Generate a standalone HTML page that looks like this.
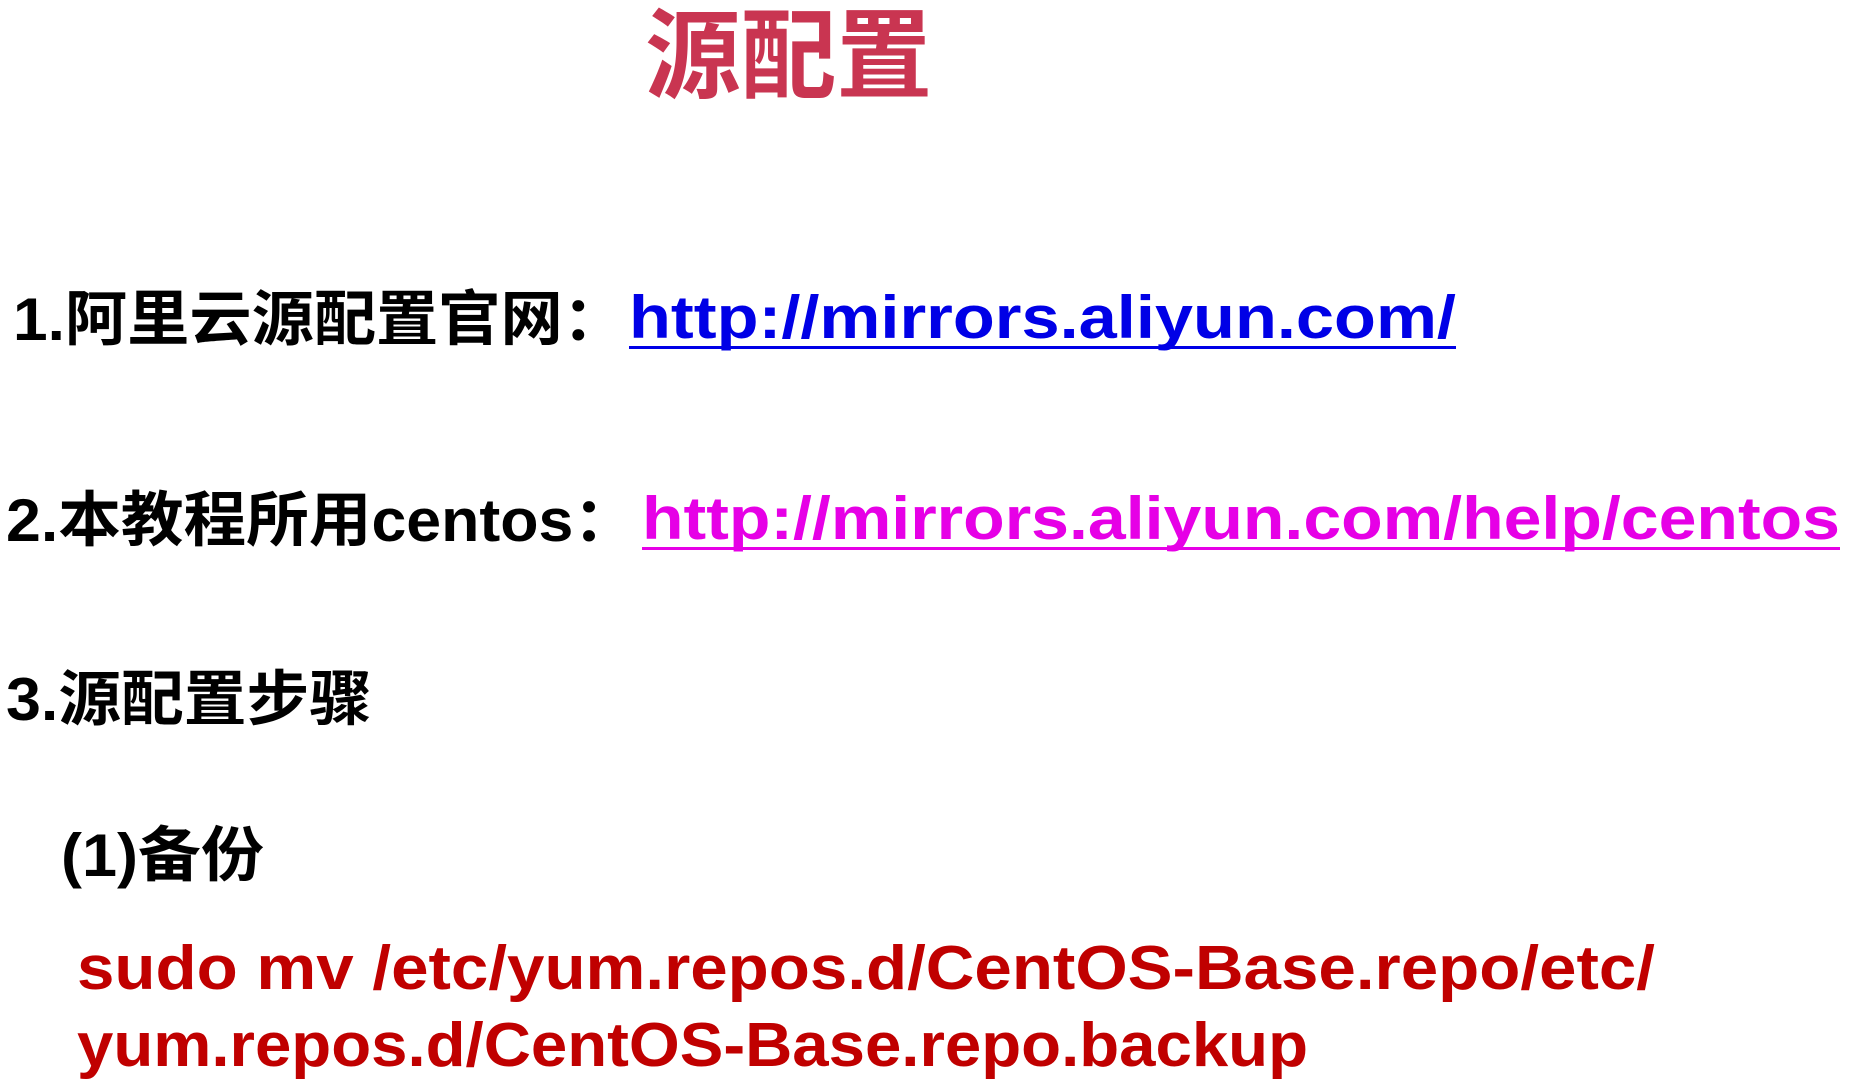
<!DOCTYPE html>
<html><head><meta charset="utf-8"><style>
html,body{margin:0;padding:0;background:#fff;width:1850px;height:1083px;overflow:hidden}
text{font-family:"Liberation Sans","Noto Sans CJK SC",sans-serif;font-weight:bold}
</style></head><body>
<svg width="1850" height="1083" xmlns="http://www.w3.org/2000/svg">
<text x="645" y="90" font-size="98" fill="#c93551" textLength="287" lengthAdjust="spacingAndGlyphs">源配置</text>

<text x="13" y="340" font-size="60" fill="#000" textLength="612" lengthAdjust="spacingAndGlyphs">1.阿里云源配置官网：</text>
<text x="629" y="338" font-size="60" fill="#0000e6" textLength="827" lengthAdjust="spacingAndGlyphs">http://mirrors.aliyun.com/</text>
<rect x="629" y="346" width="827" height="3" fill="#0000e6"/>

<text x="6" y="541" font-size="60" fill="#000" textLength="630" lengthAdjust="spacingAndGlyphs">2.本教程所用centos：</text>
<text x="642" y="539" font-size="60" fill="#e600e6" textLength="1198" lengthAdjust="spacingAndGlyphs">http://mirrors.aliyun.com/help/centos</text>
<rect x="642" y="547" width="1198" height="3" fill="#e600e6"/>

<text x="6" y="720" font-size="60" fill="#000" textLength="366" lengthAdjust="spacingAndGlyphs">3.源配置步骤</text>

<text x="61" y="876" font-size="60" fill="#000" textLength="203" lengthAdjust="spacingAndGlyphs">(1)备份</text>

<text x="77" y="989" font-size="62" fill="#c00000" textLength="1578" lengthAdjust="spacingAndGlyphs">sudo mv /etc/yum.repos.d/CentOS-Base.repo/etc/</text>
<text x="77" y="1066" font-size="62" fill="#c00000" textLength="1231" lengthAdjust="spacingAndGlyphs">yum.repos.d/CentOS-Base.repo.backup</text>
</svg>
</body></html>
